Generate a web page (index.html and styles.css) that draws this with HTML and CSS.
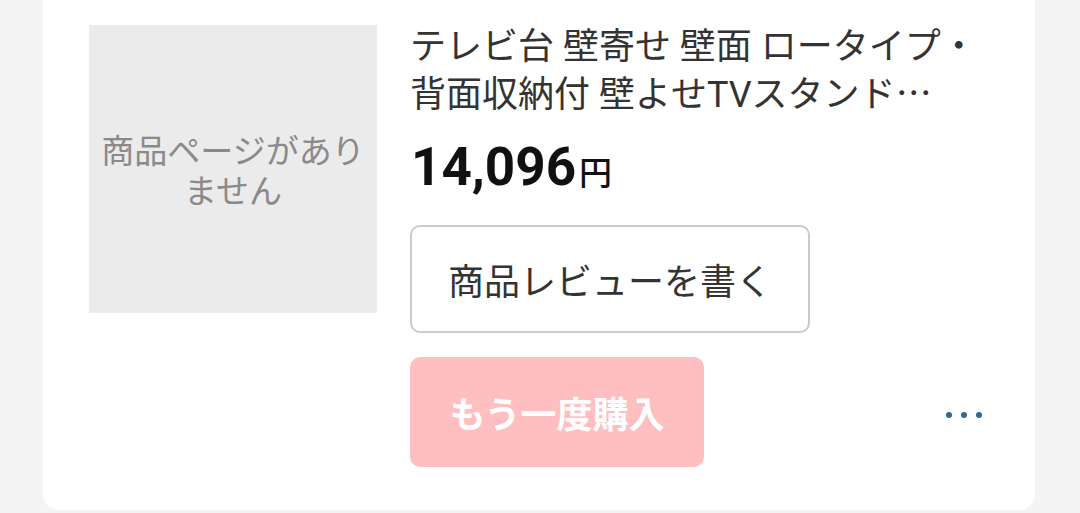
FILE: index.html
```html
<!DOCTYPE html>
<html lang="ja">
<head>
<meta charset="utf-8">
<link rel="stylesheet" href="styles.css">
</head>
<body>
<div class="page">
  <div class="card">
    <div class="thumb"><span class="thumb-text">商品ページがありません</span></div>
    <div class="info">
      <div class="title">テレビ台 壁寄せ 壁面 ロータイプ・<br>背面収納付 壁よせTVスタンド<span class="ell">…</span></div>
      <div class="price"><span class="num">14,096</span><span class="yen">円</span></div>
      <button class="btn btn-review">商品レビューを書く</button>
      <div class="bottom-row">
        <button class="btn btn-rebuy">もう一度購入</button>
        <div class="more"><span></span><span></span><span></span></div>
      </div>
    </div>
  </div>
</div>
</body>
</html>
```
FILE: styles.css
```css
html, body {
  margin: 0;
  padding: 0;
  background: #f4f4f4;
  width: 1080px;
  height: 513px;
  overflow: hidden;
  font-family: Roboto, "Noto Sans CJK JP", sans-serif;
}
.page {
  padding: 0 45px 0 43px;
}
.card {
  background: #fff;
  border-radius: 0 0 16px 16px;
  height: 485px;
  padding: 25px 50px 0 46px;
  display: flex;
  gap: 33px;
}
.thumb {
  width: 288px;
  height: 288px;
  flex: none;
  background: #ebebeb;
  display: flex;
  align-items: center;
  justify-content: center;
  text-align: center;
  padding: 0 10px;
  box-sizing: border-box;
}
.thumb-text {
  font-family: "Noto Sans CJK JP", sans-serif;
  font-size: 33px;
  line-height: 40px;
  color: #8a8a8a;
}
.info {
  flex: 1;
  display: flex;
  flex-direction: column;
  align-items: flex-start;
}
.title {
  font-size: 36px;
  line-height: 44px;
  color: #333;
}
.ell {
  font-family: "Noto Sans CJK JP", sans-serif;
}
.price {
  margin-top: 25px;
  margin-left: 1px;
  height: 52px;
  line-height: 50px;
  color: #111;
}
.num {
  font-size: 53px;
  font-weight: 700;
  font-family: Roboto, sans-serif;
}
.yen {
  font-family: "Noto Sans CJK JP", sans-serif;
  font-size: 33px;
  font-weight: 500;
  margin-left: 3px;
}
.btn {
  font-family: "Noto Sans CJK JP", sans-serif;
  font-size: 36px;
  border-radius: 10px;
  box-sizing: border-box;
  padding: 0;
  cursor: pointer;
}
.btn-review {
  margin-top: 31px;
  width: 400px;
  height: 108px;
  background: #fff;
  border: 2px solid #cbcbcb;
  color: #333;
}
.bottom-row {
  margin-top: 24px;
  width: 100%;
  display: flex;
  align-items: center;
  justify-content: space-between;
}
.btn-rebuy {
  width: 294px;
  height: 110px;
  background: #ffbfc1;
  border: none;
  color: #fff;
  font-weight: 700;
}
.more {
  display: flex;
  gap: 9px;
  margin-right: 3px;
  margin-top: 6px;
}
.more span {
  width: 6px;
  height: 6px;
  border-radius: 50%;
  background: #2c6a9a;
}
```
